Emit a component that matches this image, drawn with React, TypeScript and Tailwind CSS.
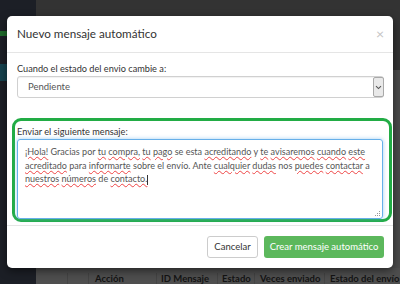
import React from "react";

const words: [string, boolean][] = [
  ["¡Hola!", true], ["Gracias", false], ["por", false], ["tu", true], ["compra,", true],
  ["tu", true], ["pago", true], ["se", false], ["esta", false], ["acreditando", true],
  ["y", false], ["te", true], ["avisaremos", true], ["cuando", true], ["este", true],
  ["acreditado", true], ["para", false], ["informarte", true], ["sobre", false], ["el", false],
  ["envío.", false], ["Ante", false], ["cualquier", true], ["dudas", true], ["nos", false],
  ["puedes", true], ["contactar", true], ["a", false], ["nuestros", true], ["números", true],
  ["de", false], ["contacto.", true],
];

export default function App() {
  return (
    <div
      className="relative w-[400px] h-[284px] overflow-hidden flex"
      style={{ fontFamily: "Lato, 'Open Sans', sans-serif" }}
    >
      {/* sidebar */}
      <div className="w-[36px] h-full bg-[#1c1f26] flex flex-col text-[9px] text-[#6b7079]">
        <div className="h-[20px]" />
        <div className="leading-[10px] h-[10px]" />
        <div className="w-[10px] h-[5px] bg-[#1f6b2c] mt-[1px]" />
        <div className="h-[28px]" />
        <div className="h-[17px] bg-[#16434f]" />
        <div className="flex-1" />
      </div>
      {/* main */}
      <div className="flex-1 flex flex-col">
        <div className="h-[70px] bg-[#333333]" />
        <div className="flex-1 bg-[#4a4a4a] flex flex-col justify-end">
          <div className="h-[16px] bg-[#4e4e4e] flex text-[9.5px] font-bold text-[#141414] leading-[12px] pt-[5px]">
            <div className="w-[32px] border-r border-[#444]" />
            <div className="w-[21px] border-r border-[#444]" />
            <div className="w-[68px] border-r border-[#444] pl-[6px]">Acción</div>
            <div className="w-[61px] border-r border-[#444] pl-[4px] whitespace-nowrap">ID Mensaje</div>
            <div className="w-[37px] border-r border-[#444] pl-[4px]">Estado</div>
            <div className="w-[70px] border-r border-[#444] pl-[5px] whitespace-nowrap">Veces enviado</div>
            <div className="flex-1 pl-[5px] whitespace-nowrap">Estado del envío</div>
          </div>
        </div>
      </div>

      {/* modal */}
      <div className="absolute left-[7px] top-[16px] w-[386px] h-[252px] bg-white rounded-[5px] shadow-[0_3px_9px_rgba(0,0,0,0.5)] flex flex-col">
        <div className="h-[37px] border-b border-[#e5e5e5] flex items-center justify-between pl-[10px] pr-[9px]">
          <span className="text-[11.7px] text-[#333] leading-none">Nuevo mensaje automático</span>
          <span className="text-[14px] text-[#c4c4c4] leading-none">×</span>
        </div>
        <div className="px-[10px] pt-[10px]">
          <div className="text-[9.2px] text-[#333] leading-[12px]">Cuando el estado del envio cambie a:</div>
          <div className="mt-[1px] h-[22px] w-[367px] border border-[#d0d0d0] rounded-[3px] flex items-center shadow-[inset_0_1px_1px_rgba(0,0,0,0.06)]">
            <span className="pl-[10px] text-[9.5px] text-[#555] flex-1">Pendiente</span>
            <div className="w-[11px] h-[20px] mr-[-1px] bg-[#e9e9e9] border border-[#a9a9a9] rounded-[2px] flex items-center justify-center">
              <svg width="7" height="5" viewBox="0 0 7 5">
                <path d="M1 1.2 L3.5 3.6 L6 1.2" fill="none" stroke="#555" strokeWidth="1.1" />
              </svg>
            </div>
          </div>
        </div>
        <div className="mt-[20px] ml-[5px] w-[380px] h-[104px] border-[3px] border-[#22ac45] rounded-[9px] pt-[5px] pl-[2px]">
          <div className="text-[9.2px] text-[#333] leading-[12px]">Enviar el siguiente mensaje:</div>
          <div className="relative mt-[1px] w-[366px] h-[80px] border border-[#66afe9] rounded-[3px] shadow-[0_0_4px_rgba(102,175,233,0.6)] pl-[7px] pr-[5px] pt-[5px] text-[9.05px] leading-[13.5px] text-[#555]">
            {words.map(([w, u], i) => (
              <React.Fragment key={i}>
                <span className={u ? "underline decoration-wavy decoration-[#e44] decoration-[1px] underline-offset-[1px]" : ""}>{w}</span>
                {i < words.length - 1 ? " " : ""}
              </React.Fragment>
            ))}
            <span className="inline-block w-[1px] h-[10px] bg-[#333] align-middle" />
            <svg className="absolute right-[1px] bottom-[1px]" width="6" height="6" viewBox="0 0 6 6">
              <rect x="4" y="0" width="1" height="1" fill="#999" />
              <rect x="2" y="2" width="1" height="1" fill="#999" />
              <rect x="4" y="2" width="1" height="1" fill="#999" />
              <rect x="0" y="4" width="1" height="1" fill="#999" />
              <rect x="2" y="4" width="1" height="1" fill="#999" />
              <rect x="4" y="4" width="1" height="1" fill="#999" />
            </svg>
          </div>
        </div>
        <div className="mt-[3px] border-t border-[#e5e5e5] flex justify-end gap-[6px] pr-[9px] pt-[10px]">
          <div className="h-[22px] w-[51px] border border-[#ccc] rounded-[3px] flex items-center justify-center text-[9.5px] text-[#333]">Cancelar</div>
          <div className="h-[22px] w-[120px] bg-[#5cb85c] rounded-[3px] flex items-center justify-center text-[9.5px] text-white">Crear mensaje automático</div>
        </div>
      </div>
    </div>
  );
}
